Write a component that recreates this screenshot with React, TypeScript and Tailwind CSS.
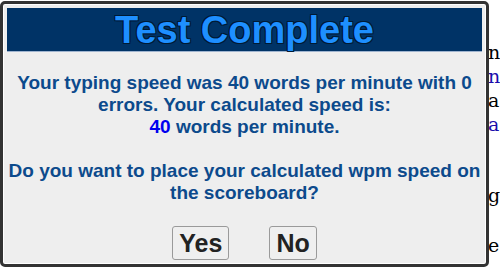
import React from 'react'

const pageLines: { ch: string; top: number; blue?: boolean }[] = [
  { ch: 'n', top: 40 },
  { ch: 'n', top: 64, blue: true },
  { ch: 'a', top: 88 },
  { ch: 'a', top: 112, blue: true },
  { ch: 'g', top: 183 },
  { ch: 'e', top: 233 },
]

const btn = "bg-[#efefef] border border-[#9a9a9a] rounded-[3px] h-[34px] px-[6px] text-[25px] font-bold text-[#222] leading-none"

export default function App() {
  return (
    <div className="relative w-[500px] h-[273px] bg-white overflow-hidden" style={{ fontFamily: '"DejaVu Serif", serif' }}>
      {/* page behind the dialog */}
      <div className="text-[19px] text-black">
        {pageLines.map((l, i) => (
          <div key={i} className={`absolute left-[488px] leading-[24px] ${l.blue ? 'text-[#1a0dab]' : ''}`} style={{ top: l.top }}>
            {l.ch}
          </div>
        ))}
      </div>

      {/* dialog */}
      <div
        className="absolute left-0 top-[1px] w-[489px] h-[266px] border-[3px] border-[#333] rounded-[5px] bg-[#eeeeee] shadow-[inset_0_0_0_1px_#fff] p-[4px] flex flex-col"
        style={{ fontFamily: '"Liberation Sans", Arial, sans-serif' }}
      >
        <div className="h-[44px] bg-[#003366] border-b border-[#9fb4cf] flex items-center justify-center">
          <h1 className="text-[38px] font-bold text-[#1e8fff] leading-none [text-shadow:-1px_-1px_0_#001a33,1px_-1px_0_#001a33,-1px_1px_0_#001a33,1px_1px_0_#001a33,0_0_1px_#000]">
            Test Complete
          </h1>
        </div>

        <div className="mt-[20px] -mx-[2px] text-center text-[19px] font-bold text-[#0c4a8c] leading-[22px]">
          <p>
            Your typing speed was 40 words per minute with 0 errors. Your calculated speed is:
            <br />
            <span className="text-[#0000ee]">40</span> words per minute.
          </p>
          <p className="mt-[22px]">Do you want to place your calculated wpm speed on the scoreboard?</p>
        </div>

        <div className="mt-auto flex justify-center gap-[40px]">
          <button className={btn}>Yes</button>
          <button className={btn}>No</button>
        </div>
      </div>
    </div>
  )
}
